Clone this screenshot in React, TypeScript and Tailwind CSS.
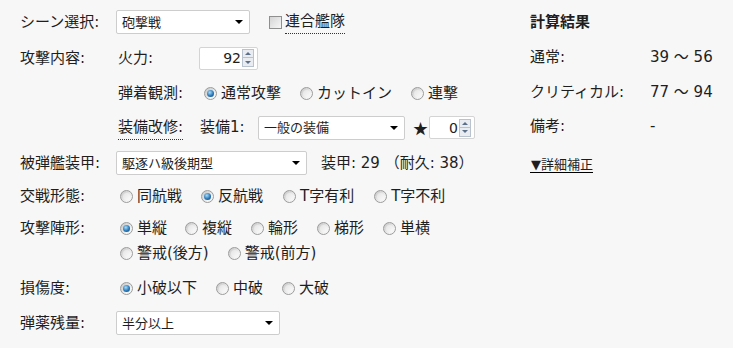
import React from "react";

const font = "font-['DejaVu_Sans','Noto_Sans_CJK_JP',sans-serif]";

const Radio = ({ checked }: { checked?: boolean }) => (
    <span className="relative inline-flex w-[13px] h-[13px] shrink-0 items-center justify-center rounded-full border border-[#9c9c9c] bg-[linear-gradient(135deg,#c4c4c4,#f4f4f4_70%)]">
        {checked ? (
            <span className="w-[7px] h-[7px] rounded-full bg-[radial-gradient(circle_at_40%_35%,#a9dcf7,#2a78b8_55%,#0d3c6a)]" />
        ) : (
            <span className="w-[7px] h-[7px] rounded-full bg-[linear-gradient(135deg,#e4e4e4,#fafafa)]" />
        )}
    </span>
);

const Option = ({ label, checked, className = "" }: { label: string; checked?: boolean; className?: string }) => (
    <label className={`inline-flex items-center gap-[4px] ${className}`}>
        <Radio checked={checked} />
        <span>{label}</span>
    </label>
);

const Select = ({ value, width }: { value: string; width: string }) => (
    <div className={`flex h-[24px] items-center justify-between rounded-[2px] border border-[#cdcdcd] bg-white pl-[5px] pr-[6px] text-[13px] ${width}`}>
        <span>{value}</span>
        <span className="w-0 h-0 border-l-[4px] border-r-[4px] border-t-[4px] border-l-transparent border-r-transparent border-t-black" />
    </div>
);

const Spinner = ({ value, width }: { value: string; width: string }) => (
    <div className={`flex h-[23px] items-center justify-end rounded-[2px] border border-[#d4d4d4] bg-white pr-[3px] text-[14px] ${width}`}>
        <span className="mr-[1px]">{value}</span>
        <div className="flex flex-col">
            <span className="flex h-[9px] w-[12px] items-center justify-center border border-[#b9c3d0] bg-[#e9edf2]">
                <span className="w-0 h-0 border-l-[3px] border-r-[3px] border-b-[3px] border-l-transparent border-r-transparent border-b-[#5b6f88]" />
            </span>
            <span className="flex h-[9px] w-[12px] items-center justify-center border border-t-0 border-[#b9c3d0] bg-[#e9edf2]">
                <span className="w-0 h-0 border-l-[3px] border-r-[3px] border-t-[3px] border-l-transparent border-r-transparent border-t-[#5b6f88]" />
            </span>
        </div>
    </div>
);

const App = () => {
    return (
        <div className={`flex h-[348px] w-[733px] bg-[#f7f7f7] text-[15px] leading-none text-[#1e1e1e] ${font}`}>
            <div className="flex w-[510px] flex-col pl-[20px] pt-[4px]">
                <div className="flex h-[36px] items-center">
                    <span className="w-[96px]">シーン選択:</span>
                    <Select value="砲撃戦" width="w-[134px]" />
                    <span className="ml-[19px] w-[13px] h-[13px] border border-[#8f8f8f] bg-[linear-gradient(135deg,#d4d4d4,#f7f7f7)]" />
                    <span className="ml-[3px] border-b border-dotted border-[#333] pb-[4px] pt-[4px]">連合艦隊</span>
                </div>
                <div className="flex h-[36px] items-center">
                    <span className="w-[98px]">攻撃内容:</span>
                    <span className="w-[81px]">火力:</span>
                    <Spinner value="92" width="w-[59px]" />
                </div>
                <div className="flex h-[34px] items-center">
                    <span className="w-[98px]" />
                    <span className="w-[86px]">弾着観測:</span>
                    <Option label="通常攻撃" checked className="mr-[19px]" />
                    <Option label="カットイン" className="mr-[19px]" />
                    <Option label="連撃" />
                </div>
                <div className="flex h-[35px] items-center">
                    <span className="w-[98px]" />
                    <span className="w-[82px]">
                        <span className="border-b border-dotted border-[#333] pb-[3px]">装備改修:</span>
                    </span>
                    <span className="w-[58px]">装備1:</span>
                    <Select value="一般の装備" width="w-[147px]" />
                    <span className="ml-[8px] mr-[1px] font-['Noto_Sans_CJK_JP',sans-serif] text-[15px]">★</span>
                    <Spinner value="0" width="w-[46px]" />
                </div>
                <div className="flex h-[36px] items-center">
                    <span className="w-[96px]">被弾艦装甲:</span>
                    <Select value="駆逐ハ級後期型" width="w-[191px]" />
                    <span className="ml-[14px]">装甲: 29 （耐久: 38）</span>
                </div>
                <div className="flex h-[30px] items-center">
                    <span className="w-[100px]">交戦形態:</span>
                    <Option label="同航戦" className="mr-[19px]" />
                    <Option label="反航戦" checked className="mr-[20px]" />
                    <Option label="T字有利" className="mr-[20px]" />
                    <Option label="T字不利" />
                </div>
                <div className="flex h-[60px] items-start pt-[5px]">
                    <span className="flex h-[25px] w-[100px] items-center">攻撃陣形:</span>
                    <div className="flex flex-col">
                        <div className="flex h-[25px] items-center">
                            <Option label="単縦" checked className="mr-[18px]" />
                            <Option label="複縦" className="mr-[19px]" />
                            <Option label="輪形" className="mr-[19px]" />
                            <Option label="梯形" className="mr-[19px]" />
                            <Option label="単横" />
                        </div>
                        <div className="flex h-[25px] items-center">
                            <Option label="警戒(後方)" className="mr-[19px]" />
                            <Option label="警戒(前方)" />
                        </div>
                    </div>
                </div>
                <div className="flex h-[34px] items-center">
                    <span className="w-[100px]">損傷度:</span>
                    <Option label="小破以下" checked className="mr-[19px]" />
                    <Option label="中破" className="mr-[19px]" />
                    <Option label="大破" />
                </div>
                <div className="flex h-[36px] items-center">
                    <span className="w-[96px]">弾薬残量:</span>
                    <Select value="半分以上" width="w-[164px]" />
                </div>
            </div>
            <div className="flex flex-col pl-[20px] pt-[4px]">
                <div className="flex h-[36px] items-center font-bold">計算結果</div>
                <div className="flex h-[35px] items-center">
                    <span className="w-[120px]">通常:</span>
                    <span>39 ～ 56</span>
                </div>
                <div className="flex h-[34px] items-center">
                    <span className="w-[120px]">クリティカル:</span>
                    <span>77 ～ 94</span>
                </div>
                <div className="flex h-[34px] items-center">
                    <span className="w-[120px]">備考:</span>
                    <span>-</span>
                </div>
                <div className="mt-[12px] flex h-[20px] items-center">
                    <span className="border-b border-black pb-[1px] pl-[1px] text-[13px]">▼詳細補正</span>
                </div>
            </div>
        </div>
    );
};

export default App;
